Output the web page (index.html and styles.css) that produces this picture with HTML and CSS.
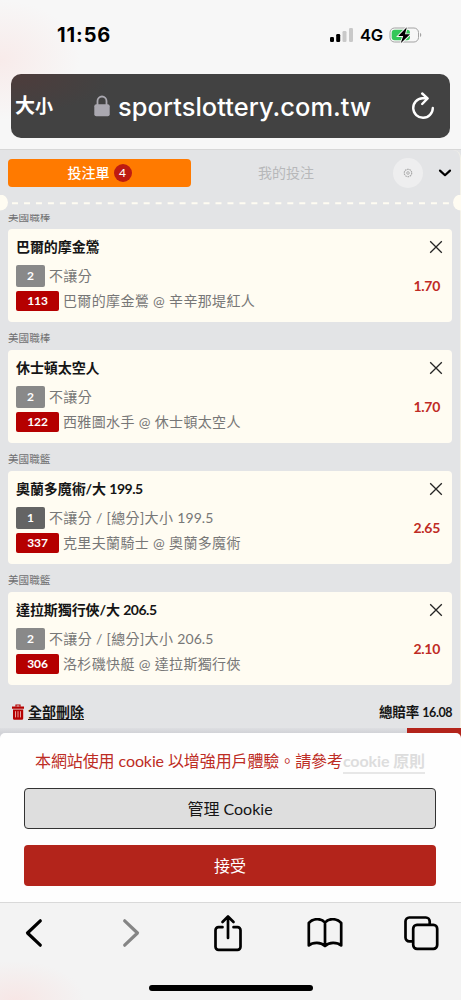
FILE: index.html
```html
<!DOCTYPE html>
<html lang="zh-Hant">
<head>
<meta charset="utf-8">
<title>投注單</title>
<link rel="stylesheet" href="styles.css">
</head>
<body>
<div class="phone">
  <header class="top">
    <div class="status">
      <span class="time">11:56</span>
      <span class="status-right">
        <svg class="signal" width="24" height="16" viewBox="0 0 24 16"><rect x="0" y="10" width="4" height="5" rx="1.2"/><rect x="6.2" y="7" width="4" height="8" rx="1.2"/><g fill="#c9c9c9"><rect x="12.5" y="4" width="4" height="11" rx="1.2"/><rect x="19" y="1" width="4" height="14" rx="1.2"/></g></svg>
        <span class="network">4G</span>
        <svg class="battery" width="34" height="18" viewBox="0 0 34 18"><rect x="1" y="2" width="28.5" height="14" rx="4.5" fill="none" stroke="#a3a3a3"/><path d="M31 6.7q2.6 2 0 4.5z" fill="#a3a3a3"/><rect x="2.7" y="3.7" width="18.3" height="10.6" rx="3" fill="#34c759"/><path d="M17.8 1.2 9.2 10h5l-2.5 7.3L21 8.3h-5z" stroke="#f7f7f7" stroke-width="1.8" paint-order="stroke"/></svg>
      </span>
    </div>
    <div class="address">
      <span class="text-size">大<small>小</small></span>
      <svg class="lock" width="16" height="22" viewBox="0 0 16 22"><path d="M3.5 10V6a4.5 4.5 0 0 1 9 0v4" fill="none" stroke="#aaa8b0" stroke-width="1.8"/><rect x=".3" y="9.2" width="15.4" height="12" rx="2" fill="#aaa8b0"/></svg>
      <span class="domain">sportslottery.com.tw</span>
      <svg class="reload" width="24" height="28" viewBox="0 0 24 28" fill="none" stroke="#fff" stroke-width="2.4" stroke-linecap="round" stroke-linejoin="round"><path d="M15 6.200H11.500A9.800 9.800 0 1 0 21.800 16"/><path d="M11.200 1.500 16.600 6.400 11.200 12"/></svg>
    </div>
  </header>

  <main class="slip">
    <div class="tabs">
      <div class="tab-active">投注單<span class="count">4</span></div>
      <div class="tab">我的投注</div>
      <div class="gear"><svg width="10" height="10" viewBox="0 0 10 10" fill="none" stroke="#aaa"><circle cx="5" cy="5" r="3.7" stroke-dasharray="1.6 .7" stroke-width="1.2"/><circle cx="5" cy="5" r="1.3" stroke-width=".9"/></svg></div>
      <svg class="chevron" width="14" height="10" viewBox="0 0 14 10"><path d="M2 2.600 7 7.200l5-4.600" fill="none" stroke="#000" stroke-width="2.200" stroke-linecap="round" stroke-linejoin="round"/></svg>
    </div>
    <div class="tear"><svg width="461" height="16" viewBox="0 0 461 16"><path d="M12 8.300H450" stroke="#fffcf2" stroke-width="2" stroke-dasharray="6 5.970"/><circle cx="0" cy="7.500" r="8" fill="#fffcf2"/><circle cx="461" cy="7.500" r="8" fill="#fffcf2"/></svg></div>

    <div class="league first"><span>美國職棒</span></div>
    <section class="bet">
      <div class="info"><h2>巴爾的摩金鶯</h2>
        <div class="line market"><b class="legs">2</b>不讓分</div>
        <div class="line"><b class="code">113</b>巴爾的摩金鶯 @ 辛辛那堤紅人</div></div>
      <div class="side"><svg class="close" width="14" height="14" viewBox="0 0 14 14"><path d="M1.2 1.2l11.600 11.600M12.800 1.200 1.200 12.800"/></svg><span class="odds">1.70</span></div>
    </section>

    <div class="league"><span>美國職棒</span></div>
    <section class="bet">
      <div class="info"><h2>休士頓太空人</h2>
        <div class="line market"><b class="legs">2</b>不讓分</div>
        <div class="line"><b class="code">122</b>西雅圖水手 @ 休士頓太空人</div></div>
      <div class="side"><svg class="close" width="14" height="14" viewBox="0 0 14 14"><path d="M1.2 1.2l11.600 11.600M12.800 1.200 1.200 12.800"/></svg><span class="odds">1.70</span></div>
    </section>

    <div class="league"><span>美國職籃</span></div>
    <section class="bet">
      <div class="info"><h2>奧蘭多魔術/大 <span class="num">199.5</span></h2>
        <div class="line market"><b class="legs single">1</b>不讓分 / [總分]大小 <span class="figure">199.5</span></div>
        <div class="line"><b class="code">337</b>克里夫蘭騎士 @ 奧蘭多魔術</div></div>
      <div class="side"><svg class="close" width="14" height="14" viewBox="0 0 14 14"><path d="M1.2 1.2l11.600 11.600M12.800 1.200 1.200 12.800"/></svg><span class="odds">2.65</span></div>
    </section>

    <div class="league"><span>美國職籃</span></div>
    <section class="bet">
      <div class="info"><h2>達拉斯獨行俠/大 <span class="num">206.5</span></h2>
        <div class="line market"><b class="legs">2</b>不讓分 / [總分]大小 <span class="figure">206.5</span></div>
        <div class="line"><b class="code">306</b>洛杉磯快艇 @ 達拉斯獨行俠</div></div>
      <div class="side"><svg class="close" width="14" height="14" viewBox="0 0 14 14"><path d="M1.2 1.2l11.600 11.600M12.800 1.200 1.200 12.800"/></svg><span class="odds">2.10</span></div>
    </section>

    <div class="summary">
      <svg class="trash" width="12" height="16" viewBox="0 0 12 16"><path d="M4 2.800V1h4v1.800" fill="none" stroke="#b50000" stroke-width="1.200"/><path d="M0 2.600h12v2.200H0zM1 5.600h10.200v9a1.200 1.200 0 0 1-1.200 1.200H2.200A1.200 1.200 0 0 1 1 14.600z" fill="#b50000"/><path d="M3.500 7.200v6.200M6 7.200v6.200M8.500 7.200v6.200" stroke="#edb3b0" stroke-width=".9"/></svg>
      <a class="clear">全部刪除</a>
      <span class="total">總賠率 <span class="sum">16.08</span></span>
    </div>
    <div class="shade"><div class="peek"></div></div>
  </main>

  <div class="cookie-wrap">
    <section class="cookie">
      <p>本網站使用 cookie 以增強用戶體驗。請參考<a>cookie 原則</a></p>
      <div class="button manage">管理 Cookie</div>
      <div class="button accept">接受</div>
    </section>
  </div>

  <footer class="toolbar">
    <nav>
      <svg width="18" height="30" viewBox="0 0 18 30" fill="none" stroke="#000" stroke-width="3.200" stroke-linecap="round" stroke-linejoin="round"><path d="M15.300 2.800 2.500 15l12.800 12.200"/></svg>
      <svg width="18" height="30" viewBox="0 0 18 30" fill="none" stroke="#858585" stroke-width="3.200" stroke-linecap="round" stroke-linejoin="round"><path d="M2.700 2.800 15.500 15 2.700 27.200"/></svg>
      <svg width="30" height="38" viewBox="0 0 30 38" fill="none" stroke="#000" stroke-width="2.700" stroke-linecap="round" stroke-linejoin="round"><path d="M9.500 13.200H5.500a3 3 0 0 0-3 3v16.600a3 3 0 0 0 3 3h19a3 3 0 0 0 3-3V16.200a3 3 0 0 0-3-3H20.500M15 24V2.500M9.500 8 15 2.500 20.500 8"/></svg>
      <svg width="36" height="30" viewBox="0 0 36 30" fill="none" stroke="#000" stroke-width="2.700" stroke-linecap="round" stroke-linejoin="round"><path d="M18 28V4.500C14-.2 6 .2 1.800 5v22.500C6 24 14 24 18 28M18 4.500C22-.2 30 .2 34.200 5v22.500C30 24 22 24 18 28"/></svg>
      <svg width="35" height="35" viewBox="0 0 35 35" fill="none" stroke="#000" stroke-width="2.700" stroke-linejoin="round"><path d="M8 25.300H5.300a3.800 3.800 0 0 1-3.800-3.800V5.300a3.800 3.800 0 0 1 3.800-3.800h16.600a3.800 3.800 0 0 1 3.800 3.800V8"/><rect x="9.200" y="8.900" width="24" height="24" rx="3.800"/></svg>
    </nav>
    <div class="home"></div>
  </footer>
</div>
</body>
</html>
```
FILE: styles.css
```css
* { box-sizing: border-box; margin: 0; padding: 0; }
body { font-family: Lato, "Noto Sans CJK TC", sans-serif; color: #151515; }
svg { display: block; flex: none; }
.phone { width: 461px; height: 1000px; display: flex; flex-direction: column; overflow: hidden; background: #e3e4e6; }

.top { height: 150px; flex: none; padding: 0 11px; background: radial-gradient(ellipse 80px 60px at 0 60px, #f8ebea, transparent), #f7f7f7; border-bottom: 1px solid #d7d7d7; font-family: Inter, "Noto Sans CJK TC", sans-serif; }
.status { height: 74px; padding: 0 27px 5px 46px; display: flex; align-items: center; justify-content: space-between; }
.time { font-size: 20px; font-weight: 700; color: #000; letter-spacing: .9px; }
.status-right { display: flex; align-items: center; }
.network { font-size: 16.5px; font-weight: 600; color: #000; margin: 0 6px 0 6px; letter-spacing: -.2px; }
.address { height: 64px; border-radius: 10px; background: radial-gradient(ellipse 100px 40px at 0 0, #4e3c3b, transparent), #424242; color: #fff; display: flex; align-items: center; padding: 0 15px 0 4px; }
.text-size { width: 79px; font-size: 20px; font-weight: 700; white-space: nowrap; line-height: 30px; }
.text-size small { font-size: 18px; }
.lock { margin-right: 8px; }
.domain { font-size: 25.4px; font-weight: 500; line-height: 30px; letter-spacing: .06px; white-space: nowrap; padding-top: 1px; }
.reload { margin-left: auto; }

.slip { height: 583px; flex: none; border-right: 1px solid #f4f2e9; border-radius: 8px 8px 0 0; background: #e3e4e6; }
.tabs { height: 45px; padding: 8px 9px 8px 8px; display: flex; align-items: center; font-size: 14px; line-height: 28px; }
.tab-active { width: 183px; height: 28px; background: #ff7a00; color: #fff; border-radius: 4px; display: flex; justify-content: center; align-items: center; font-weight: 500; }
.count { width: 18px; height: 18px; margin-left: 4px; border-radius: 50%; background: #bd1b12; font-size: 12px; line-height: 18px; text-align: center; }
.tab { width: 190px; text-align: center; color: #b7b8ba; }
.gear { width: 30px; height: 30px; margin-left: 12px; border-radius: 50%; background: #eeeeef; display: grid; place-items: center; flex: none; }
.chevron { margin-left: auto; margin-right: -1px; }
.tear { height: 16px; margin: 0 -1px 0 0; }
.league { height: 28px; padding: 8px 8px 0; font-size: 10.6px; line-height: 16px; color: #6f6f70; }
.league.first { height: 18px; padding-top: 0; }
.league.first span { display: block; height: 15px; line-height: 7px; overflow: hidden; }
.league.first { padding-top: 3px; }
.bet { height: 93px; margin: 0 8px; padding: 8px 12px 0 8px; background: #fffcf2; border-radius: 4px; display: flex; justify-content: space-between; }
h2 { font-size: 14px; line-height: 20px; font-weight: 700; letter-spacing: -.08px; white-space: nowrap; }
.num { letter-spacing: -.5px; }
.line { display: flex; align-items: center; height: 20px; line-height: 20px; font-size: 14px; letter-spacing: .35px; color: #777; white-space: pre; }
.figure { letter-spacing: .1px; }
.market { height: 22px; margin: 8px 0 4px; }
.legs, .code { width: 29px; height: 22px; line-height: 22px; margin-right: 4px; border-radius: 2px; background: #898989; color: #fff; text-align: center; font-size: 12px; font-weight: 700; letter-spacing: -.1px; }
.single { background: #646464; }
.code { width: 43px; height: 20px; line-height: 20px; background: #b50000; }
.side { display: flex; flex-direction: column; align-items: flex-end; padding-top: 3px; }
.close { margin-right: -3px; fill: none; stroke: #242424; stroke-width: 1.3; }
.odds { margin-top: 22px; font-size: 14px; line-height: 20px; font-weight: 700; letter-spacing: -.3px; color: #bf2b24; }
.summary { height: 43px; padding: 16px 8px 5px 12px; display: flex; align-items: center; font-weight: 700; font-size: 14px; line-height: 22px; }
.clear { margin-left: 4px; text-decoration: underline; text-decoration-thickness: 1px; text-underline-offset: 2px; }
.total { margin-left: auto; font-size: 13.5px; letter-spacing: -.1px; }
.sum { font-size: 12.5px; letter-spacing: -.45px; }
.shade { height: 5px; margin-right: -1px; display: flex; justify-content: flex-end; background: linear-gradient(#dedfe2, #d1d2d7); }
.peek { width: 54px; height: 5px; background: #b3241b; }

.cookie-wrap { height: 169px; flex: none; background: linear-gradient(90deg, #d2d3d8 50%, #b3241b 50%); }
.cookie { height: 169px; padding: 14px 25px 16px 24px; background: #fefefe; border-radius: 5px 5px 0 0; display: flex; flex-direction: column; font-size: 16px; }
.cookie p { line-height: 28px; color: #bd2c24; text-align: center; white-space: nowrap; letter-spacing: -.1px; }
.cookie a { color: #ddd; font-weight: 700; display: inline-block; line-height: 22px; border-bottom: 2px solid #e7e7e7; }
.button { height: 41px; flex: none; border-radius: 4px; line-height: 39px; text-align: center; }
.manage { margin-top: 13px; background: #dedede; border: 1px solid #333; }
.accept { margin-top: 16px; background: #b3241b; color: #fff; line-height: 41px; }

.toolbar { height: 98px; flex: none; border-top: 1px solid #d9d9d9; background: radial-gradient(ellipse 70px 40px at 15px 98px, #f7e6e5, transparent), #f3f3f3; display: flex; flex-direction: column; }
nav { width: 484px; height: 60px; margin-left: -14px; display: grid; grid-template-columns: repeat(5, 1fr); place-items: center; }
.home { width: 164px; height: 6px; margin: 22px 0 0 149px; border-radius: 3px; background: #000; }
```
